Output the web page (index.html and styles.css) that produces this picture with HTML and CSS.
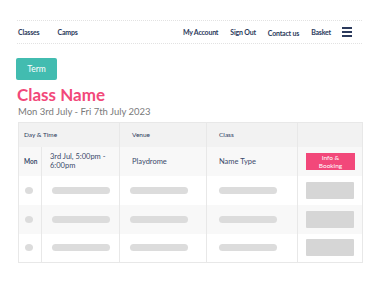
FILE: index.html
```html
<html lang="en">
<head>
  <title>Class Name</title>
  <link rel="stylesheet" href="styles.css">
</head>
<body>
<div class="nav">
  <div class="links">
    <span class="link">Classes</span>
    <span class="link">Camps</span>
  </div>
  <div class="links right">
    <span class="link">My Account</span>
    <span class="link">Sign Out</span>
    <span class="link low">Contact us</span>
    <span class="link">Basket</span>
    <div class="burger"><span></span><span></span><span></span></div>
  </div>
</div>

<div class="content">
  <div class="term">Term</div>
  <div class="title">Class Name</div>
  <div class="dates">Mon 3rd July - Fri 7th July 2023</div>

  <table class="sessions">
    <colgroup>
      <col class="c1"><col class="c2"><col class="c3"><col class="c4"><col class="c5">
    </colgroup>
    <tr class="head">
      <th colspan="2" class="first">Day &amp; Time</th>
      <th>Venue</th>
      <th>Class</th>
      <th></th>
    </tr>
    <tr class="shade">
      <td class="day">Mon</td>
      <td class="time">3rd Jul, 5:00pm -<br>6:00pm</td>
      <td class="text">Playdrome</td>
      <td class="text">Name Type</td>
      <td class="btn"><div class="book">Info &amp;<br>Booking</div></td>
    </tr>
    <tr>
      <td class="sk1"><div class="dot"></div></td>
      <td class="sk"><div class="bar"></div></td>
      <td class="sk"><div class="bar"></div></td>
      <td class="sk4"><div class="bar"></div></td>
      <td class="btn"><div class="block"></div></td>
    </tr>
    <tr class="shade">
      <td class="sk1"><div class="dot"></div></td>
      <td class="sk"><div class="bar"></div></td>
      <td class="sk"><div class="bar"></div></td>
      <td class="sk4"><div class="bar"></div></td>
      <td class="btn"><div class="block"></div></td>
    </tr>
    <tr>
      <td class="sk1"><div class="dot"></div></td>
      <td class="sk"><div class="bar"></div></td>
      <td class="sk"><div class="bar"></div></td>
      <td class="sk4"><div class="bar"></div></td>
      <td class="btn"><div class="block"></div></td>
    </tr>
  </table>
</div>
</body>
</html>
```

FILE: styles.css
```css
body { margin: 0; font-family: Lato, "Noto Sans", sans-serif; color: #2b3a5c; background: #fff; }

.nav {
  margin: 20px 13px 0 17px;
  height: 22px;
  border-top: 1px dotted #e2e2e2;
  border-bottom: 1px dotted #e2e2e2;
  display: flex;
  justify-content: space-between;
  align-items: center;
}
.links { display: flex; align-items: center; gap: 18px; padding-left: 1px; }
.links.right { gap: 12px; padding-right: 10px; }
.link { font-size: 7px; font-weight: bold; letter-spacing: -0.2px; color: #2b3a5c; }
.link.low { position: relative; top: 1px; }

.burger { width: 10px; display: flex; flex-direction: column; gap: 2.5px; margin-left: -1px; }
.burger span { display: block; height: 1.5px; background: #2b3a5c; }

.content { padding: 14px 13px 0 16px; }

.term {
  width: 41px;
  height: 22px;
  line-height: 22px;
  text-align: center;
  background: #42bcb0;
  color: #fff;
  font-size: 8.5px;
  border-radius: 2px;
}

.title { margin-top: 6px; font-size: 17px; font-weight: bold; color: #f2487a; line-height: 18px; margin-left: 1px; }
.dates { margin-top: 2px; font-size: 9.5px; color: #7a7a7a; margin-left: 2px; }

.sessions {
  margin: 5px 0 0 2px;
  width: 344px;
  table-layout: fixed;
  border-collapse: collapse;
  border: 1px solid #e8e8e8;
  font-size: 7.5px;
}
.c1 { width: 23px; }
.c2 { width: 78px; }
.c3 { width: 87px; }
.c4 { width: 91px; }
.c5 { width: 65px; }

.sessions th, .sessions td { border-left: 1px solid #e8e8e8; padding: 0 0 0 10px; height: 29px; }
.sessions th {
  height: 24px;
  text-align: left;
  font-weight: normal;
  font-size: 6.5px;
  background: #f2f2f2;
  padding-left: 12px;
}
.sessions th.first { padding-left: 5px; }
.sessions td { color: #3a4a6a; }
.shade td { background: #f8f8f8; }

.sessions .day { padding-left: 5px; font-weight: bold; font-size: 6.5px; }
.sessions .time { padding-left: 8px; line-height: 9px; }
.sessions .text { padding-left: 12px; }
.sessions .btn { padding-left: 8px; }
.sessions .sk1 { padding-left: 6px; }
.sessions .sk4 { padding-left: 12px; }

.book {
  width: 49px;
  height: 17px;
  background: #f2487a;
  color: #fff;
  font-size: 6.5px;
  text-align: center;
  line-height: 8px;
  padding-top: 1px;
  box-sizing: border-box;
}

.dot { width: 8px; height: 7px; border-radius: 50%; background: #dcdcdc; }
.bar { width: 58px; height: 7px; border-radius: 4px; background: #dcdcdc; }
.block { width: 48px; height: 17px; border-radius: 1px; background: #d6d6d6; }
```
